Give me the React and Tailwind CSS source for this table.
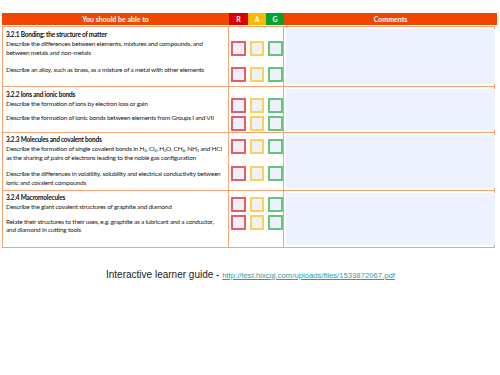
const Sub = ({ children }) => <sub className="text-[4px] leading-none">{children}</sub>;

const sections = [
  {
    title: '3.2.1 Bonding: the structure of matter',
    pt: 'pt-[3px]',
    h: 'h-[61px]',
    items: [
      { text: 'Describe the differences between elements, mixtures and compounds, and between metals and non-metals', mt: 'mt-[1px]' },
      { text: 'Describe an alloy, such as brass, as a mixture of a metal with other elements', mt: 'mt-[9px]' },
    ],
    boxes: ['mt-[14px]', 'mt-[11px]'],
  },
  {
    title: '3.2.2 Ions and ionic bonds',
    pt: 'pt-[3px]',
    h: 'h-[46px]',
    items: [
      { text: 'Describe the formation of ions by electron loss or gain', mt: 'mt-[1px]' },
      { text: 'Describe the formation of ionic bonds between elements from Groups I and VII', mt: 'mt-[5px]' },
    ],
    boxes: ['mt-[11px]', 'mt-[3px]'],
  },
  {
    title: '3.2.3 Molecules and covalent bonds',
    pt: 'pt-[2px]',
    h: 'h-[58px]',
    items: [
      {
        text: (
          <>
            Describe the formation of single covalent bonds in H<Sub>2</Sub>, Cl<Sub>2</Sub>, H<Sub>2</Sub>O, CH<Sub>4</Sub>, NH<Sub>3</Sub> and HCl as the sharing of pairs of electrons leading to the noble gas configuration
          </>
        ),
        mt: 'mt-[1px]',
      },
      { text: 'Describe the differences in volatility, solubility and electrical conductivity between ionic and covalent compounds', mt: 'mt-[8px]' },
    ],
    boxes: ['mt-[6px]', 'mt-[12px]'],
  },
  {
    title: '3.2.4 Macromolecules',
    pt: 'pt-[2px]',
    h: 'h-[57px]',
    items: [
      { text: 'Describe the giant covalent structures of graphite and diamond', mt: 'mt-[1px]' },
      { text: 'Relate their structures to their uses, e.g. graphite as a lubricant and a conductor, and diamond in cutting tools', mt: 'mt-[6px]' },
    ],
    boxes: ['mt-[6px]', 'mt-[3px]'],
  },
];

const BoxRow = ({ mt }) => (
  <div className={`flex gap-[4px] pl-[1px] ${mt}`}>
    <div className="w-[15px] h-[15px] border-2 border-[#e45d6c] bg-[#eef0fb]" />
    <div className="w-[15px] h-[15px] border-2 border-[#f8d35a] bg-[#eef0fb]" />
    <div className="w-[15px] h-[15px] border-2 border-[#66c47c] bg-[#eef0fb]" />
  </div>
);

export default function App() {
  return (
    <div className="w-[500px] h-[375px] bg-white overflow-hidden font-['Lato',sans-serif]">
      <div className="pt-[13px] px-[2px] w-[497px]">
        <div className="grid grid-cols-[227px_19px_18px_18px_213px] h-[12px] text-white font-bold text-[7px] leading-[12px] text-center border-b border-[#f9b088]">
          <div className="bg-[#f04700]">You should be able to</div>
          <div className="bg-[#d90000]">R</div>
          <div className="bg-[#ffb800]">A</div>
          <div className="bg-[#00a32c]">G</div>
          <div className="bg-[#f04700]">Comments</div>
        </div>
        <div className="mt-[1px]">
          {sections.map((s, i) => (
            <div
              key={i}
              className={`grid grid-cols-[226px_55px_213px] border-x border-b border-[#f7a474] ${i === 0 ? 'border-t' : ''} ${s.h}`}
            >
              <div className={`border-r border-[#f7a474] pl-[3px] pr-[4px] ${s.pt} text-[6.5px] tracking-[-0.22px] leading-[8.5px] text-[#222]`}>
                <div className="font-bold text-[#111] leading-[9px]">{s.title}</div>
                {s.items.map((it, j) => (
                  <div key={j} className={it.mt}>{it.text}</div>
                ))}
              </div>
              <div className="border-r border-[#f7a474] pl-[1px]">
                {s.boxes.map((mt, j) => (
                  <BoxRow key={j} mt={mt} />
                ))}
              </div>
              <div className="p-[2px]">
                <div className="w-full h-full bg-[#eef1fe]" />
              </div>
            </div>
          ))}
        </div>
      </div>
      <div className="mt-[19px] pl-[106px] flex items-baseline font-['Liberation_Sans',Arial,sans-serif]">
        <span className="text-[10px] text-[#222]">Interactive learner guide -&nbsp;</span>
        <span className="text-[7.7px] text-[#1ba3a8] underline">http://test.hixcgj.com/uploads/files/1533872067.pdf</span>
      </div>
    </div>
  );
}
